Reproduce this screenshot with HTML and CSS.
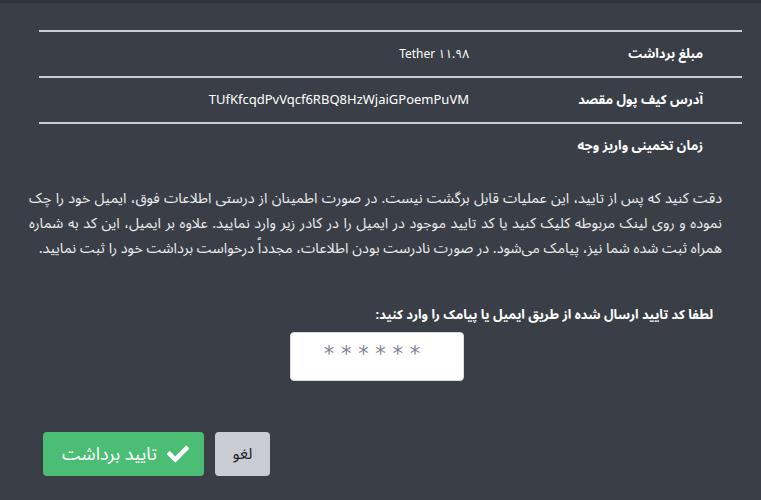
FILE: index.html
```html
<!DOCTYPE html>
<html lang="fa" dir="rtl">
<head>
    <meta charset="UTF-8">
    <meta name="viewport" content="width=device-width, initial-scale=1.0">
    <title>تایید برداشت</title>
    <link rel="stylesheet" href="styles.css">
</head>
<body>
    <div id="top-bar"></div>

    <main id="withdraw">
        <section class="summary">
            <div class="summary-row">
                <span class="summary-label">مبلغ برداشت</span>
                <span class="summary-value">Tether ۱۱.۹۸</span>
            </div>
            <div class="summary-row">
                <span class="summary-label">آدرس کیف پول مقصد</span>
                <span class="summary-value address">TUfKfcqdPvVqcf6RBQ8HzWjaiGPoemPuVM</span>
            </div>
            <div class="summary-row last">
                <span class="summary-label">زمان تخمینی واریز وجه</span>
                <span class="summary-value"></span>
            </div>
        </section>

        <p class="notice">
            دقت کنید که پس از تایید، این عملیات قابل برگشت نیست. در صورت اطمینان از درستی اطلاعات فوق، ایمیل خود را چک
            نموده و روی لینک مربوطه کلیک کنید یا کد تایید موجود در ایمیل را در کادر زیر وارد نمایید. علاوه بر ایمیل، این کد به شماره
            همراه ثبت شده شما نیز، پیامک می‌شود. در صورت نادرست بودن اطلاعات، مجدداً درخواست برداشت خود را ثبت نمایید.
        </p>

        <label for="code-input" class="code-label">لطفا کد تایید ارسال شده از طریق ایمیل یا پیامک را وارد کنید:</label>
        <div class="code-field">
            <input id="code-input" class="code-input" type="text" placeholder="* * * * * *">
        </div>

        <div class="actions">
            <button class="button cancel">لغو</button>
            <button class="button confirm">
                <svg class="check-icon" viewBox="0 0 512 512" width="22" height="22">
                    <path fill="#fff" d="M173.9 439.4L7.5 273c-10-10-10-26.2 0-36.2l36.2-36.2c10-10 26.2-10 36.2 0L192 312.7 432.1 72.6c10-10 26.2-10 36.2 0l36.2 36.2c10 10 10 26.2 0 36.2L210.1 439.4c-10 10-26.2 10-36.2 0z"/>
                </svg>
                تایید برداشت
            </button>
        </div>
    </main>
</body>
</html>
```

FILE: styles.css
```css
body {
    font-family: 'Noto Sans Arabic', 'Noto Naskh Arabic', 'DejaVu Sans', sans-serif;
    background-color: #3a3f47;
    color: #e6e6e6;
    margin: 0;
    padding: 0;
    direction: rtl;
}

#top-bar {
    height: 3px;
    background-color: #30343b;
}

#withdraw {
    padding: 27px 19px 0 19px;
}

.summary {
    margin: 0 0 0 20px;
    border-top: 2px solid #c9ccd1;
}

.summary-row {
    display: grid;
    grid-template-columns: 273px 1fr;
    align-items: center;
    height: 44px;
    border-bottom: 2px solid #c9ccd1;
}

.summary-row.last {
    border-bottom: none;
}

.summary-label {
    padding-right: 39px;
    font-size: 13px;
    font-weight: bold;
    color: #ffffff;
}

.summary-value {
    font-size: 12px;
    color: #ffffff;
}

.address {
    font-size: 13px;
}

.notice {
    margin: 18px 20px 0 10px;
    font-size: 14.4px;
    line-height: 25px;
    color: #ececec;
    text-align: justify;
}

.code-label {
    display: block;
    margin: 44px 29px 0 0;
    font-size: 13px;
    line-height: 20px;
    font-weight: bold;
    color: #ffffff;
}

.code-field {
    display: flex;
    justify-content: center;
    margin-top: 7px;
    padding-right: 7px;
}

.code-input {
    width: 174px;
    height: 49px;
    box-sizing: border-box;
    border: 1px solid #d9dce0;
    border-radius: 4px;
    background-color: #ffffff;
    font-family: 'DejaVu Sans', sans-serif;
    font-size: 21px;
    text-align: center;
    padding: 0 10px 6px 0;
    outline: none;
}

.code-input::placeholder {
    color: #7d8590;
}

.actions {
    display: flex;
    justify-content: flex-end;
    gap: 11px;
    margin-top: 51px;
    padding-left: 24px;
}

.button {
    font-family: 'Noto Sans Arabic', 'DejaVu Sans', sans-serif;
    border: none;
    border-radius: 4px;
    cursor: pointer;
    height: 44px;
}

.cancel {
    width: 55px;
    background-color: #c9ccd3;
    color: #1f2328;
    font-size: 16px;
}

.confirm {
    display: flex;
    align-items: center;
    gap: 10px;
    width: 161px;
    padding: 0 15px;
    background-color: #4bbd74;
    color: #ffffff;
    font-size: 18px;
}

.check-icon {
    flex-shrink: 0;
}
```
